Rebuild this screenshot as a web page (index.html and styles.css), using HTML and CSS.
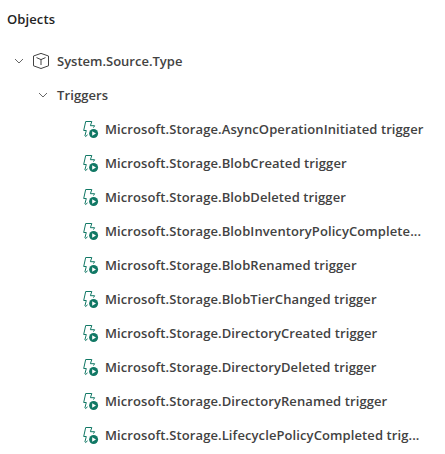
FILE: index.html
```html
<!DOCTYPE html>
<html lang="en">
<head>
<meta charset="utf-8">
<title>Objects</title>
<link rel="stylesheet" href="styles.css">
</head>
<body>
<svg class="defs" aria-hidden="true">
  <symbol id="trigger" viewBox="0 0 18 18">
    <path d="M5.6 14.8 3.6 16.5 2.9 15.9 4.3 10.5H1.7L3.7 1.5H9.8L8.4 5.7H12.6L11.5 7.6" fill="none" stroke="#117865" stroke-linejoin="round"/>
    <circle cx="11.6" cy="13.5" r="4.5" fill="#117865"/>
    <path d="M10.2 11.2V15.8L14 13.5Z" fill="#fff"/>
  </symbol>
  <symbol id="chevron" viewBox="0 0 10 6">
    <path d="M1 1 5 5 9 1" fill="none" stroke="#666"/>
  </symbol>
</svg>
<main class="panel">
  <h1 class="title">Objects</h1>
  <div class="row source"><svg class="chevron"><use href="#chevron"/></svg><svg class="cube" viewBox="0 0 18 18"><path d="M9 1.4 16.5 4V13.8L9 16.5 1.5 13.8V4ZM4.5 5.6 9 7.6 13.5 5.6M9 7.6V13" fill="none" stroke="#424242" stroke-linejoin="round"/></svg><span>System.Source.Type</span></div>
  <div class="row group"><svg class="chevron"><use href="#chevron"/></svg><span>Triggers</span></div>
  <ul class="list">
    <li class="row"><svg class="icon"><use href="#trigger"/></svg><span>Microsoft.Storage.AsyncOperationInitiated trigger</span></li>
    <li class="row"><svg class="icon"><use href="#trigger"/></svg><span>Microsoft.Storage.BlobCreated trigger</span></li>
    <li class="row"><svg class="icon"><use href="#trigger"/></svg><span>Microsoft.Storage.BlobDeleted trigger</span></li>
    <li class="row"><svg class="icon"><use href="#trigger"/></svg><span>Microsoft.Storage.BlobInventoryPolicyComplete...</span></li>
    <li class="row"><svg class="icon"><use href="#trigger"/></svg><span>Microsoft.Storage.BlobRenamed trigger</span></li>
    <li class="row"><svg class="icon"><use href="#trigger"/></svg><span>Microsoft.Storage.BlobTierChanged trigger</span></li>
    <li class="row"><svg class="icon"><use href="#trigger"/></svg><span>Microsoft.Storage.DirectoryCreated trigger</span></li>
    <li class="row"><svg class="icon"><use href="#trigger"/></svg><span>Microsoft.Storage.DirectoryDeleted trigger</span></li>
    <li class="row"><svg class="icon"><use href="#trigger"/></svg><span>Microsoft.Storage.DirectoryRenamed trigger</span></li>
    <li class="row"><svg class="icon"><use href="#trigger"/></svg><span>Microsoft.Storage.LifecyclePolicyCompleted trig...</span></li>
  </ul>
</main>
</body>
</html>
```
FILE: styles.css
```css
body {
  margin: 0;
  background: #fff;
  color: #424242;
  font: 600 13px/20px "Segoe UI", "Open Sans", sans-serif;
  letter-spacing: 0.1px;
  overflow: hidden;
}
.defs { position: absolute; width: 0; height: 0; }
.panel { padding-top: 9px; }
.title {
  margin: 0 0 15px 7px;
  color: #242424;
  font-size: 13px;
  font-weight: 600;
  line-height: 20px;
}
.row {
  display: flex;
  align-items: center;
  height: 34px;
  white-space: nowrap;
}
.source { padding-left: 14px; letter-spacing: 0; }
.group { padding-left: 38px; }
.chevron { width: 10px; height: 6px; margin-right: 9px; }
.cube { width: 18px; height: 18px; margin: 0 7px 0 -1px; }
.list { margin: 0; padding: 0 0 0 82px; list-style: none; }
.icon { width: 18px; height: 18px; margin-right: 5px; }
.chevron, .cube, .icon { flex: none; }
```
